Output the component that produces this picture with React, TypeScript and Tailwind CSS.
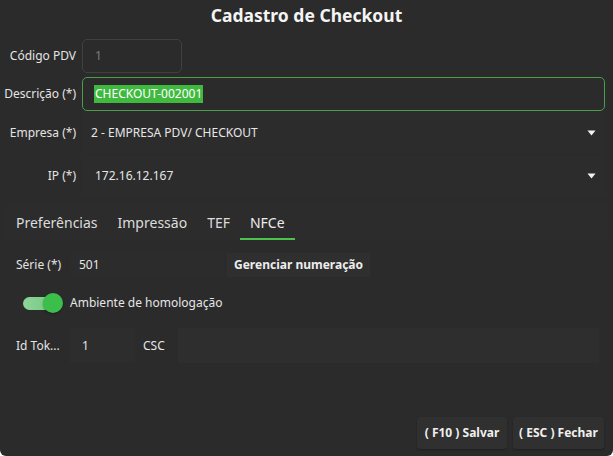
import React from "react";

const font = { fontFamily: '"Noto Sans", "Open Sans", sans-serif' };

function Caret() {
  return (
    <svg width="9" height="6" viewBox="0 0 9 6" className="shrink-0">
      <path d="M0.5 0.5 L8.5 0.5 L4.5 5.5 Z" fill="#f2f2f2" />
    </svg>
  );
}

function Label({ children }: { children: React.ReactNode }) {
  return <div className="w-[76px] shrink-0 text-right text-[12px] text-[#e4e4e4]">{children}</div>;
}

export default function App() {
  return (
    <div
      style={font}
      className="w-[613px] h-[456px] bg-[#2b2b2b] text-[#e6e6e6] text-[12px] flex flex-col rounded-b-[6px] overflow-hidden"
    >
      {/* Header */}
      <div className="h-[29px] flex items-center justify-center text-[17.5px] font-bold text-[#f4f4f4] pt-[1px]">
        Cadastro de Checkout
      </div>

      {/* Main fields */}
      <div className="flex flex-col pt-[10px] pr-[8px]">
        <div className="flex items-center gap-[6px] h-[34px]">
          <Label>Código PDV</Label>
          <div className="w-[100px] h-[34px] rounded-[5px] border border-[#404040] flex items-center px-[12px] text-[#7c7c7c]">
            1
          </div>
        </div>

        <div className="flex items-center gap-[6px] h-[34px] mt-[4px]">
          <Label>Descrição (*)</Label>
          <div className="flex-1 h-[34px] rounded-[5px] border border-[#4a9e4a] flex items-center px-[11px]">
            <span className="bg-[#3fba3f] text-white leading-[18px] px-[1px]">CHECKOUT-002001</span>
          </div>
        </div>

        <div className="flex items-center gap-[6px] h-[40px] mt-[2px]">
          <Label>Empresa (*)</Label>
          <div className="flex-1 h-[40px] bg-[#2c2c2c] flex items-center pl-[9px] pr-[9px]">
            <span className="flex-1">2 - EMPRESA PDV/ CHECKOUT</span>
            <Caret />
          </div>
        </div>

        <div className="flex items-center gap-[6px] h-[40px] mt-[3px]">
          <Label>IP (*)</Label>
          <div className="flex-1 h-[40px] bg-[#2c2c2c] flex items-center pl-[13px] pr-[9px]">
            <span className="flex-1">172.16.12.167</span>
            <Caret />
          </div>
        </div>
      </div>

      {/* Tabs */}
      <div className="mx-[5px] mt-[9px] flex flex-col flex-1 min-h-0">
        <div className="h-[35px] flex items-end bg-[#2c2c2c] pl-[1px]">
          {["Preferências", "Impressão", "TEF", "NFCe"].map((t, i) => (
            <div
              key={t}
              className={
                i === 3
                  ? "h-[35px] px-[10px] flex items-center text-[14px] text-[#ececec] border-b-2 border-[#4cc14c] pt-[1px]"
                  : "h-[35px] px-[10px] flex items-center text-[14px] text-[#dcdcdc] border-b-2 border-transparent pt-[1px]"
              }
            >
              {t}
            </div>
          ))}
        </div>

        {/* NFCe panel */}
        <div className="flex flex-col flex-1 pt-[13px]">
          <div className="flex items-center h-[24px] pl-[11px]">
            <div className="w-[54px] shrink-0 text-[#e4e4e4]">Série (*)</div>
            <div className="w-[154px] h-[24px] bg-[#2c2c2c] flex items-center pl-[9px]">501</div>
            <div className="h-[24px] px-[7px] bg-[#2f2f2f] flex items-center font-bold text-[#ededed] ml-[3px]">
              Gerenciar numeração
            </div>
          </div>

          <div className="flex items-center h-[26px] mt-[13px] pl-[17px]">
            <div className="relative w-[41px] h-[20px] flex items-center">
              <div className="absolute left-[1px] w-[36px] h-[13px] rounded-full bg-gradient-to-r from-[#8ed49a] to-[#6cc97a]" />
              <div className="absolute right-0 w-[20px] h-[20px] rounded-full bg-[#3cbf4a] shadow-[0_1px_2px_rgba(0,0,0,0.35)]" />
            </div>
            <span className="ml-[7px] text-[#e6e6e6]">Ambiente de homologação</span>
          </div>

          <div className="flex items-center h-[35px] mt-[12px] pl-[11px] pr-[9px]">
            <div className="w-[54px] shrink-0 text-[#e4e4e4] truncate">Id Tok...</div>
            <div className="w-[65px] h-[35px] bg-[#2d2d2d] flex items-center pl-[12px]">1</div>
            <div className="w-[43px] h-[35px] flex items-center pl-[8px]">CSC</div>
            <div className="flex-1 h-[35px] bg-[#2e2e2e]" />
          </div>

          <div className="flex-1" />

          {/* Footer actions */}
          <div className="flex justify-end gap-[6px] pb-[7px] pr-[4px]">
            <button className="w-[90px] h-[32px] bg-[#303030] rounded-[3px] font-bold text-[#efefef] shadow-[0_1px_2px_rgba(0,0,0,0.3)]">
              ( F10 ) Salvar
            </button>
            <button className="w-[91px] h-[32px] bg-[#303030] rounded-[3px] font-bold text-[#efefef] shadow-[0_1px_2px_rgba(0,0,0,0.3)]">
              ( ESC ) Fechar
            </button>
          </div>
        </div>
      </div>
    </div>
  );
}
